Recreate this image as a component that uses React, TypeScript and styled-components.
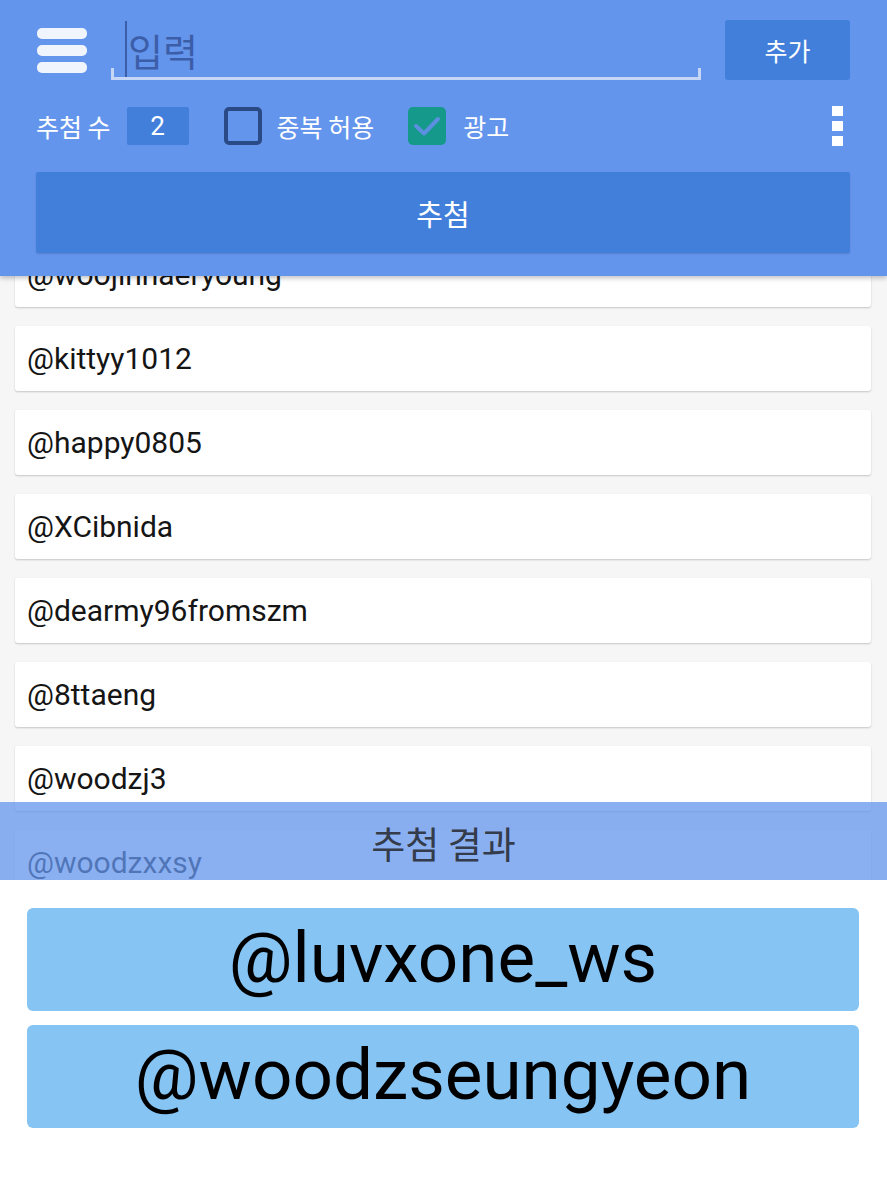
import React from "react";
import styled, { createGlobalStyle } from "styled-components";

const GlobalStyle = createGlobalStyle`
  html, body {
    margin: 0;
    padding: 0;
    background: #f6f6f6;
  }
  body {
    font-family: Roboto, "Noto Sans CJK KR", sans-serif;
  }
`;

const Color = {
  header: "#6495ed",
  button: "#417fdb",
  navy: "#2a4a86",
  teal: "#14998a",
  result: "#86c4f4",
};

const Page = styled.div`
  height: 1200px;
  display: flex;
  flex-direction: column;
  overflow: hidden;
`;

// Header

const Header = styled.header`
  position: relative;
  z-index: 3;
  flex: none;
  height: 276px;
  box-sizing: border-box;
  padding: 20px 37px 0 36px;
  background: ${Color.header};
  box-shadow: 0 2px 5px rgba(0, 0, 0, 0.25);
  display: flex;
  flex-direction: column;
`;

const TopRow = styled.div`
  display: flex;
  align-items: center;
  height: 60px;
`;

const Hamburger = styled.div`
  width: 50px;
  margin-left: 1px;
  display: flex;
  flex-direction: column;
  gap: 6px;
  span {
    display: block;
    height: 11px;
    border-radius: 5px;
    background: #f0f4fc;
  }
`;

const Field = styled.div`
  position: relative;
  width: 590px;
  height: 60px;
  margin-left: 24px;
  display: flex;
  align-items: center;
  box-sizing: border-box;
  padding-left: 14px;
  border-bottom: 3px solid #c6d6f6;
  &::before,
  &::after {
    content: "";
    position: absolute;
    bottom: 0;
    width: 3px;
    height: 9px;
    background: #c6d6f6;
  }
  &::before { left: 0; }
  &::after { right: 0; }
`;

const Caret = styled.span`
  width: 2px;
  height: 56px;
  background: #3c5ea8;
  margin-right: 1px;
`;

const Placeholder = styled.span`
  font-family: "Noto Sans CJK KR", sans-serif;
  font-size: 38px;
  color: #3c5ea8;
  line-height: 1;
  margin-top: 2px;
`;

const SmallButton = styled.button`
  margin-left: auto;
  width: 125px;
  height: 60px;
  border: none;
  border-radius: 3px;
  background: ${Color.button};
  color: #fff;
  font-family: "Noto Sans CJK KR", sans-serif;
  font-size: 25px;
  padding: 0;
`;

const OptionRow = styled.div`
  margin-top: 27px;
  height: 38px;
  display: flex;
  align-items: center;
`;

const Label = styled.span<{ $gap?: number }>`
  font-family: "Noto Sans CJK KR", sans-serif;
  font-size: 25px;
  color: #fff;
  margin-left: ${(p) => p.$gap ?? 0}px;
  line-height: 1;
`;

const CountBox = styled.div`
  margin-left: 16px;
  width: 62px;
  height: 38px;
  background: ${Color.button};
  border-radius: 2px;
  color: #fff;
  font-size: 26px;
  display: flex;
  align-items: center;
  justify-content: center;
`;

const Box = styled.div<{ $checked?: boolean; $gap: number }>`
  margin-left: ${(p) => p.$gap}px;
  width: 38px;
  height: 38px;
  box-sizing: border-box;
  border-radius: 5px;
  border: ${(p) => (p.$checked ? "none" : `4px solid ${Color.navy}`)};
  background: ${(p) => (p.$checked ? Color.teal : "transparent")};
  display: flex;
  align-items: center;
  justify-content: center;
`;

const Kebab = styled.div`
  margin-left: auto;
  margin-right: 7px;
  display: flex;
  flex-direction: column;
  gap: 5px;
  span {
    width: 11px;
    height: 10px;
    background: #fff;
  }
`;

const DrawButton = styled.button`
  margin-top: 27px;
  height: 81px;
  width: 100%;
  border: none;
  border-radius: 2px;
  background: ${Color.button};
  color: #fff;
  font-family: "Noto Sans CJK KR", sans-serif;
  font-size: 29px;
  padding: 0;
  box-shadow: 0 1px 2px rgba(0, 0, 0, 0.15);
`;

// Entry list

const ListViewport = styled.div`
  flex: 1;
  overflow: hidden;
  background: #f6f6f6;
`;

const ListInner = styled.div`
  margin-top: -34px;
  display: flex;
  flex-direction: column;
  gap: 19px;
  padding: 0 16px 0 15px;
`;

const Card = styled.div`
  height: 65px;
  flex: none;
  background: #fff;
  border-radius: 3px;
  box-shadow: 0 1px 2px rgba(0, 0, 0, 0.2);
  display: flex;
  align-items: center;
  padding-left: 12px;
  font-size: 30px;
  color: #151515;
`;

// Result sheet

const Sheet = styled.section`
  position: relative;
  z-index: 2;
  flex: none;
  margin-top: -78px;
  height: 398px;
  display: flex;
  flex-direction: column;
`;

const SheetTitle = styled.div`
  height: 78px;
  flex: none;
  background: rgba(100, 149, 237, 0.75);
  display: flex;
  align-items: center;
  justify-content: center;
  padding-top: 4px;
  box-sizing: border-box;
  font-family: "Noto Sans CJK KR", sans-serif;
  font-size: 37px;
  color: #343b4a;
`;

const SheetBody = styled.div`
  flex: 1;
  background: #fff;
  padding: 28px 28px 0 27px;
  display: flex;
  flex-direction: column;
  gap: 14px;
`;

const ResultBox = styled.div`
  height: 103px;
  border-radius: 6px;
  background: ${Color.result};
  display: flex;
  align-items: center;
  justify-content: center;
  font-size: 71px;
  color: #000;
  line-height: 1;
  padding-bottom: 4px;
  box-sizing: border-box;
`;

const entries = [
  "@woojinhaeryoung",
  "@kittyy1012",
  "@happy0805",
  "@XCibnida",
  "@dearmy96fromszm",
  "@8ttaeng",
  "@woodzj3",
  "@woodzxxsy",
];

const winners = ["@luvxone_ws", "@woodzseungyeon"];

const Check = () => (
  <svg width="30" height="24" viewBox="0 0 30 24">
    <path d="M4 12 L12 19.5 L26 5" fill="none" stroke="#5b8fe0" strokeWidth="4" strokeLinecap="round" strokeLinejoin="round" />
  </svg>
);

export default function App() {
  return (
    <Page>
      <GlobalStyle />
      <Header>
        <TopRow>
          <Hamburger>
            <span />
            <span />
            <span />
          </Hamburger>
          <Field>
            <Caret />
            <Placeholder>입력</Placeholder>
          </Field>
          <SmallButton>추가</SmallButton>
        </TopRow>
        <OptionRow>
          <Label>추첨 수</Label>
          <CountBox>2</CountBox>
          <Box $gap={35} />
          <Label $gap={15}>중복 허용</Label>
          <Box $gap={34} $checked>
            <Check />
          </Box>
          <Label $gap={17}>광고</Label>
          <Kebab>
            <span />
            <span />
            <span />
          </Kebab>
        </OptionRow>
        <DrawButton>추첨</DrawButton>
      </Header>
      <ListViewport>
        <ListInner>
          {entries.map((e) => (
            <Card key={e}>{e}</Card>
          ))}
        </ListInner>
      </ListViewport>
      <Sheet>
        <SheetTitle>추첨 결과</SheetTitle>
        <SheetBody>
          {winners.map((w) => (
            <ResultBox key={w}>{w}</ResultBox>
          ))}
        </SheetBody>
      </Sheet>
    </Page>
  );
}
